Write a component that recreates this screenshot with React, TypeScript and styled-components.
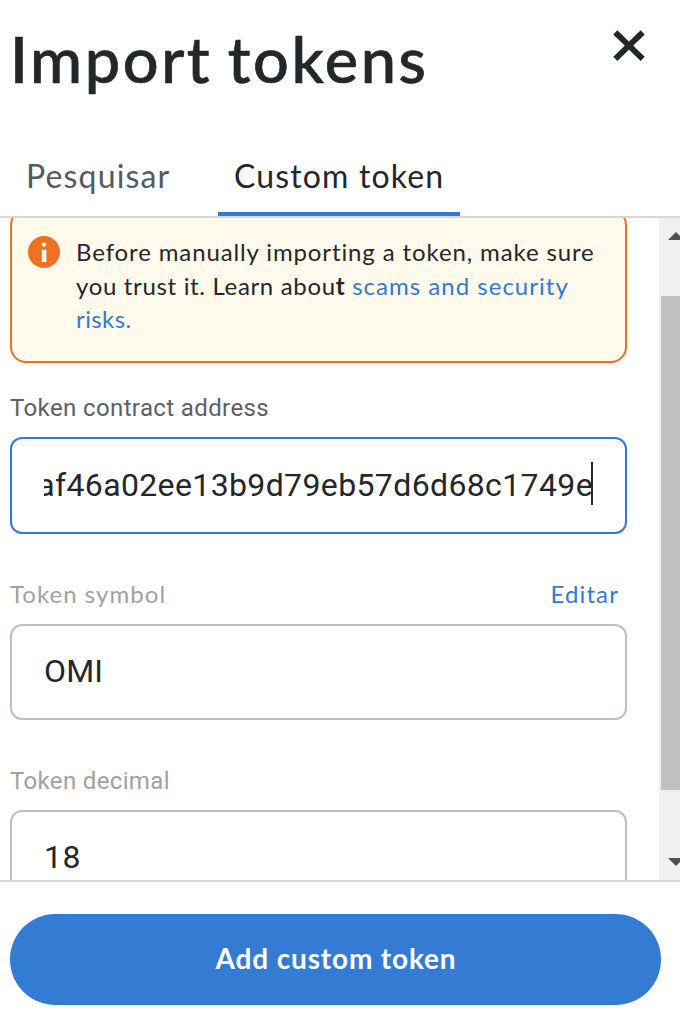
import React from "react";
import styled, { createGlobalStyle } from "styled-components";

const GlobalStyle = createGlobalStyle`
  * { box-sizing: border-box; }
  body { margin: 0; background: #fff; overflow: hidden; }
`;

const geometric = `Lato, "Open Sans", sans-serif`;
const grotesque = `Roboto, "Liberation Sans", sans-serif`;

const Modal = styled.main`
  display: flex;
  flex-direction: column;
  width: 680px;
  height: 1018px;
  overflow: hidden;
  background: #fff;
  color: #24272a;
  font-family: ${geometric};
`;

const Header = styled.header`
  display: flex;
  justify-content: space-between;
  align-items: flex-start;
  height: 136px;
  padding: 20px 35px 0 10px;
`;

const Title = styled.h1`
  margin: 0;
  font-size: 63px;
  line-height: 77px;
  font-weight: 500;
  letter-spacing: 2.6px;
  word-spacing: -3px;
  -webkit-text-stroke: 0.7px currentColor;
  white-space: nowrap;
`;

const CloseButton = styled.button`
  display: flex;
  margin: 10px 0 0;
  padding: 0;
  border: 0;
  background: none;
  color: #24272a;
`;

const Tabs = styled.nav`
  display: flex;
  height: 82px;
  border-bottom: 2px solid #d6d9dc;
`;

const Tab = styled.button<{ $active?: boolean; $width: number; $left: number }>`
  width: ${(p) => p.$width}px;
  padding: 3px 0 0 ${(p) => p.$left}px;
  border: 0;
  border-bottom: 4px solid ${(p) => (p.$active ? "#3379d3" : "transparent")};
  background: none;
  color: ${(p) => (p.$active ? "#24272a" : "#535a61")};
  font-family: inherit;
  font-size: 32px;
  line-height: 40px;
  letter-spacing: 1.15px;
  text-align: left;
  white-space: nowrap;
`;

const Body = styled.div`
  display: flex;
  justify-content: space-between;
  height: 662px;
  overflow: hidden;
`;

const Form = styled.div`
  width: 627px;
  margin-top: -9px;
  padding-left: 10px;
`;

const Banner = styled.section`
  display: flex;
  gap: 16px;
  height: 154px;
  padding: 24px 16px 0;
  border: 2px solid #ed7124;
  border-radius: 16px;
  background: #fffaeb;
`;

const BannerText = styled.p`
  margin: 0;
  font-size: 24px;
  line-height: 33.5px;
`;

const BannerLine = styled.span<{ $spacing: number }>`
  display: block;
  letter-spacing: ${(p) => p.$spacing}px;
  white-space: nowrap;
`;

const Link = styled.a<{ $spacing?: number }>`
  color: #3379d3;
  letter-spacing: ${(p) => (p.$spacing === undefined ? "inherit" : `${p.$spacing}px`)};
`;

const InfoIcon = styled.svg`
  flex: none;
  margin-top: 1px;
`;

const Field = styled.div<{ $top: number }>`
  padding-top: ${(p) => p.$top}px;
`;

const LabelRow = styled.div<{ $lineHeight?: number }>`
  display: flex;
  justify-content: space-between;
  height: 45px;
  padding-right: 8px;
  font-size: 24px;
  line-height: ${(p) => p.$lineHeight ?? 32}px;
  white-space: nowrap;
`;

const Label = styled.label<{ $muted?: boolean; $family?: string; $spacing: number }>`
  color: ${(p) => (p.$muted ? "#9fa1a3" : "#5b6066")};
  font-family: ${(p) => p.$family ?? grotesque};
  letter-spacing: ${(p) => p.$spacing}px;
`;

const Input = styled.div<{ $focused?: boolean }>`
  display: flex;
  align-items: center;
  justify-content: ${(p) => (p.$focused ? "flex-end" : "flex-start")};
  height: ${(p) => (p.$focused ? 97 : 96)}px;
  padding: 0 32px 1px;
  border: 2px solid ${(p) => (p.$focused ? "#3379d3" : "#bbc0c5")};
  border-radius: 12px;
`;

const Value = styled.span<{ $spacing: number }>`
  display: flex;
  justify-content: flex-end;
  overflow: hidden;
  font-family: ${grotesque};
  font-size: 32px;
  line-height: 43px;
  letter-spacing: ${(p) => p.$spacing}px;
  white-space: nowrap;
`;

const Caret = styled.span`
  flex: none;
  width: 2px;
  height: 43px;
  margin: -3px 0 0 -2px;
  background: #24272a;
`;

const Scrollbar = styled.div`
  display: flex;
  flex-direction: column;
  width: 21px;
  background: #f0f0f0;
`;

const Arrow = styled.svg<{ $top?: number }>`
  display: block;
  flex: none;
  margin: ${(p) => p.$top ?? 0}px 0 0 9px;
`;

const Thumb = styled.div`
  height: 494px;
  margin: 56px 0 68px 2px;
  background: #c1c1c1;
`;

const Footer = styled.footer`
  height: 138px;
  padding: 32px 19px 0 10px;
  border-top: 2px solid #d6d9dc;
`;

const SubmitButton = styled.button`
  width: 100%;
  height: 91px;
  padding: 0 0 3px 1px;
  border: 0;
  border-radius: 46px;
  background: #347bd4;
  color: #fff;
  font-family: inherit;
  font-size: 28px;
  font-weight: 700;
  letter-spacing: 0.85px;
`;

export default function App() {
  return (
    <Modal>
      <GlobalStyle />
      <Header>
        <Title>Import tokens</Title>
        <CloseButton aria-label="Close">
          <svg width="32" height="32" viewBox="0 0 32 32" fill="none" stroke="currentColor" strokeWidth="5.8">
            <path d="M2.3 2.3 29.7 28.9M29.7 2.3 2.3 28.9" />
          </svg>
        </CloseButton>
      </Header>
      <Tabs>
        <Tab $width={218} $left={26}>Pesquisar</Tab>
        <Tab $width={242} $left={16} $active>Custom token</Tab>
      </Tabs>
      <Body>
        <Form>
          <Banner>
            <InfoIcon width="32" height="32" viewBox="0 0 32 32">
              <circle cx="16" cy="16" r="16" fill="#ed7124" />
              <circle cx="16" cy="8.6" r="2.2" fill="#fffaeb" />
              <path d="M13.8 13.7h4.6V26h-4.6z" fill="#fffaeb" />
            </InfoIcon>
            <BannerText>
              <BannerLine $spacing={0.88}>Before manually importing a token, make sure</BannerLine>
              <BannerLine $spacing={0.66}>
                you trust it. Learn abou<b>t</b> <Link $spacing={1.02}>scams and security</Link>
              </BannerLine>
              <BannerLine $spacing={0.4}><Link>risks.</Link></BannerLine>
            </BannerText>
          </Banner>
          <Field $top={29}>
            <LabelRow>
              <Label $spacing={0.38}>Token contract address</Label>
            </LabelRow>
            <Input $focused>
              <Value $spacing={0.37}>af46a02ee13b9d79eb57d6d68c1749e</Value>
              <Caret />
            </Input>
          </Field>
          <Field $top={45}>
            <LabelRow $lineHeight={30}>
              <Label $muted $family={geometric} $spacing={1.05}>Token symbol</Label>
              <Link $spacing={1.1}>Editar</Link>
            </LabelRow>
            <Input>
              <Value $spacing={0.2}>OMI</Value>
            </Input>
          </Field>
          <Field $top={45}>
            <LabelRow>
              <Label $muted $spacing={0.35}>Token decimal</Label>
            </LabelRow>
            <Input>
              <Value $spacing={0.5}>18</Value>
            </Input>
          </Field>
        </Form>
        <Scrollbar>
          <Arrow $top={14} width="12" height="8" viewBox="0 0 12 8">
            <path d="M0 8 8 0l8 8z" fill="#505050" />
          </Arrow>
          <Thumb />
          <Arrow width="12" height="8" viewBox="0 0 12 8">
            <path d="M0 0h16L8 8z" fill="#505050" />
          </Arrow>
        </Scrollbar>
      </Body>
      <Footer>
        <SubmitButton>Add custom token</SubmitButton>
      </Footer>
    </Modal>
  );
}
